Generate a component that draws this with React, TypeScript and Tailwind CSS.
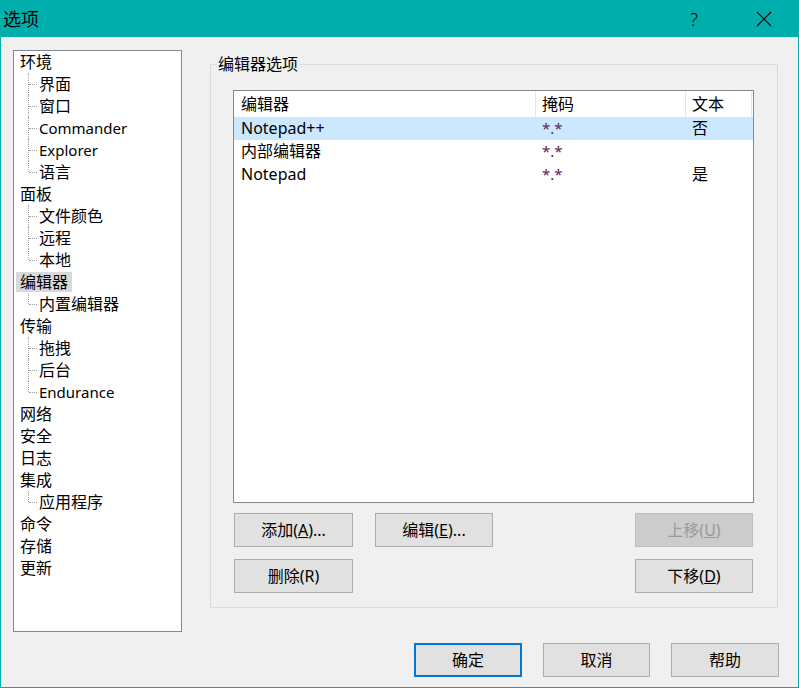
import React from "react";

type Node = { label: string; children?: string[] };

const tree: Node[] = [
  { label: "环境", children: ["界面", "窗口", "Commander", "Explorer", "语言"] },
  { label: "面板", children: ["文件颜色", "远程", "本地"] },
  { label: "编辑器", children: ["内置编辑器"] },
  { label: "传输", children: ["拖拽", "后台", "Endurance"] },
  { label: "网络" },
  { label: "安全" },
  { label: "日志" },
  { label: "集成", children: ["应用程序"] },
  { label: "命令" },
  { label: "存储" },
  { label: "更新" },
];

const editors = [
  { name: "Notepad++", mask: "*.*", text: "否", selected: true },
  { name: "内部编辑器", mask: "*.*", text: "" },
  { name: "Notepad", mask: "*.*", text: "是" },
];

const font = "font-['Noto_Sans','Noto_Sans_CJK_SC',sans-serif]";

// CJK glyphs read a touch larger than the latin ones in the original
function T({ s }: { s: string }) {
  const latin = /^[\x00-\x7f]+$/.test(s);
  return <span className={latin ? "text-[15px]" : "text-[16px]"}>{s}</span>;
}

function TreeChild({ label, last }: { label: string; last: boolean }) {
  return (
    <div className="flex h-[22px] items-center pl-[6px]">
      <div className="relative h-full w-[19px] shrink-0">
        <div
          className={`absolute left-[8px] top-0 border-l border-dotted border-[#a0a0a0] ${
            last ? "h-[11px]" : "h-[22px]"
          }`}
        />
        <div className="absolute left-[9px] top-[11px] w-[8px] border-t border-dotted border-[#a0a0a0]" />
      </div>
      <span className="leading-[22px]">
        <T s={label} />
      </span>
    </div>
  );
}

function Btn({
  children,
  className = "",
  disabled,
  primary,
}: {
  children: React.ReactNode;
  className?: string;
  disabled?: boolean;
  primary?: boolean;
}) {
  const look = disabled
    ? "border border-[#bfbfbf] bg-[#cccccc] text-[#9a9a9a]"
    : primary
    ? "border-2 border-[#0078d7] bg-[#e1e1e1] text-black"
    : "border border-[#adadad] bg-[#e1e1e1] text-black";
  return (
    <button
      className={`flex h-[34px] items-center justify-center text-[16px] ${look} ${className}`}
    >
      {children}
    </button>
  );
}

export default function App() {
  return (
    <div
      className={`flex h-[688px] w-[799px] flex-col border border-[#00aeab] bg-[#f0f0f0] text-[16px] text-black ${font}`}
    >
      {/* title bar */}
      <div className="flex h-[36px] shrink-0 items-center bg-[#00afab]">
        <span className="pl-[2px] text-[18px] leading-none">选项</span>
        <span className="ml-auto mr-[58px] text-[19px] font-light leading-none">?</span>
        <svg width="16" height="16" viewBox="0 0 16 16" className="mr-[26px]">
          <path d="M1 1L15 15M15 1L1 15" stroke="#000" strokeWidth="1.1" fill="none" />
        </svg>
      </div>

      <div className="flex flex-1 flex-col pl-[12px] pt-[13px]">
        <div className="flex">
          {/* tree */}
          <div className="h-[582px] w-[169px] shrink-0 border border-[#828790] bg-white">
            {tree.map((n) => (
              <div key={n.label}>
                <div className="flex h-[22px] items-center pl-[2px]">
                  {n.label === "编辑器" ? (
                    <span className="h-[20px] bg-[#d9d9d9] px-[4px] leading-[20px]">
                      {n.label}
                    </span>
                  ) : (
                    <span className="px-[4px] leading-[22px]">{n.label}</span>
                  )}
                </div>
                {n.children?.map((c, i) => (
                  <TreeChild key={c} label={c} last={i === n.children!.length - 1} />
                ))}
              </div>
            ))}
          </div>

          {/* group box */}
          <div className="relative ml-[28px] mt-[14px] h-[544px] w-[568px] border border-[#dcdcdc] pl-[22px] pt-[25px]">
            <span className="absolute -top-[11px] left-[6px] bg-[#f0f0f0] px-[1px] leading-[20px]">
              编辑器选项
            </span>

            <div className="h-[413px] w-[521px] border border-[#828790] bg-white">
              <div className="flex h-[26px]">
                <div className="w-[301px] pl-[7px] leading-[26px]">编辑器</div>
                <div className="w-[150px] border-l border-[#e5e5e5] pl-[6px] leading-[26px]">
                  掩码
                </div>
                <div className="w-[67px] border-l border-r border-[#e5e5e5] pl-[6px] leading-[26px]">
                  文本
                </div>
              </div>
              {editors.map((e) => (
                <div
                  key={e.name}
                  className={`flex h-[23px] leading-[23px] ${e.selected ? "bg-[#cce8ff]" : ""}`}
                >
                  <div className="w-[301px] pl-[7px]">{e.name}</div>
                  <div className="w-[150px] pl-[7px] text-[15px] text-[#5c2060]">{e.mask}</div>
                  <div className="w-[67px] pl-[7px]">{e.text}</div>
                </div>
              ))}
            </div>

            <div className="mt-[10px] flex pl-[1px]">
              <Btn className="w-[119px]">
                添加(<u>A</u>)...
              </Btn>
              <Btn className="ml-[22px] w-[118px]">
                编辑(<u>E</u>)...
              </Btn>
              <Btn className="ml-[142px] w-[118px]" disabled>
                上移(<u>U</u>)
              </Btn>
            </div>
            <div className="mt-[12px] flex pl-[1px]">
              <Btn className="w-[119px]">删除(R)</Btn>
              <Btn className="ml-[282px] w-[118px]">
                下移(<u>D</u>)
              </Btn>
            </div>
          </div>
        </div>

        {/* dialog buttons */}
        <div className="mt-[11px] flex justify-end gap-[21px] pr-[19px]">
          <Btn className="w-[108px]" primary>
            确定
          </Btn>
          <Btn className="w-[107px]">取消</Btn>
          <Btn className="w-[108px]">帮助</Btn>
        </div>
      </div>
    </div>
  );
}
